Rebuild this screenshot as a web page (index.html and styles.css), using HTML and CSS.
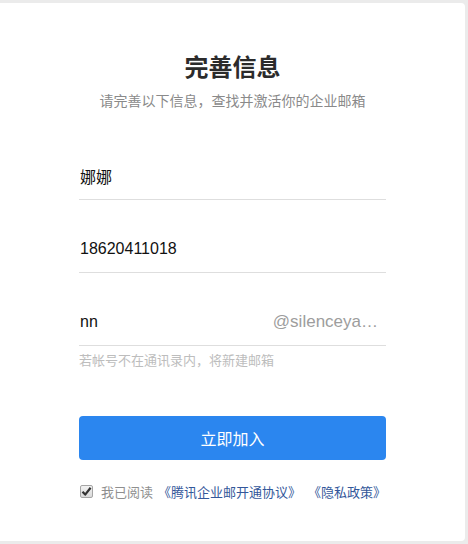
FILE: index.html
```html
<!DOCTYPE html>
<html lang="zh">
<head>
<meta charset="utf-8">
<title>完善信息</title>
<link rel="stylesheet" href="styles.css">
</head>
<body>
<div class="card">
  <h1 class="title">完善信息</h1>
  <p class="subtitle">请完善以下信息，查找并激活你的企业邮箱</p>
  <form class="form">
    <div class="field"><span class="value">娜娜</span></div>
    <div class="field"><span class="value num">18620411018</span></div>
    <div class="field split">
      <span class="value num">nn</span>
      <span class="domain">@silenceya…</span>
    </div>
    <p class="hint">若帐号不在通讯录内，将新建邮箱</p>
    <button type="button" class="btn">立即加入</button>
    <div class="agree">
      <span class="check"><svg width="11" height="11" viewBox="0 0 11 11"><path d="M1.5 5.8 L4.2 8.6 L9.6 1.8" fill="none" stroke="#333" stroke-width="2.2" stroke-linejoin="round"/></svg></span>
      <span class="agree-text">我已阅读</span>
      <a class="link">《腾讯企业邮开通协议》</a>
      <a class="link">《隐私政策》</a>
    </div>
  </form>
</div>
</body>
</html>
```

FILE: styles.css
```css
* { box-sizing: border-box; }
html, body { margin: 0; padding: 0; }
body {
  background: #ebebeb;
  font-family: "Microsoft YaHei", "Noto Sans CJK SC", "Liberation Sans", sans-serif;
  width: 468px;
  height: 544px;
  overflow: hidden;
}
.card {
  margin: 3px 3px 0 0;
  height: 538px;
  background: #fff;
  border-radius: 0 4px 4px 0;
  padding-top: 47px;
}
.title {
  margin: 0;
  text-align: center;
  font-size: 24px;
  line-height: 32px;
  font-weight: bold;
  color: #2b2b2b;
}
.subtitle {
  margin: 8px 0 0;
  text-align: center;
  font-size: 14px;
  line-height: 20px;
  color: #8a8a8a;
}
.form {
  width: 307px;
  margin: 45px 0 0 79px;
  display: flex;
  flex-direction: column;
}
.field {
  height: 45px;
  border-bottom: 1px solid #dedede;
  display: flex;
  align-items: center;
  padding: 0 8px 3px 1px;
  margin-bottom: 28px;
}
.field.split { justify-content: space-between; margin-bottom: 0; }
.value {
  font-size: 16px;
  color: #111;
}
.num { font-family: "Liberation Sans", Arial, sans-serif; }
.domain {
  font-family: "Liberation Sans", Arial, sans-serif;
  font-size: 17px;
  color: #9d9d9d;
}
.hint {
  margin: 4px 0 0;
  font-size: 13px;
  line-height: 20px;
  color: #bdbdbd;
}
.btn {
  margin-top: 46px;
  height: 44px;
  border: 0;
  border-radius: 4px;
  background: #2b86ef;
  color: #fff;
  font-family: inherit;
  font-size: 16px;
  padding: 0;
}
.agree {
  margin-top: 21px;
  display: flex;
  align-items: center;
  height: 20px;
  font-size: 13px;
  padding-left: 1px;
  white-space: nowrap;
}
.check {
  flex: none;
  width: 13px;
  height: 13px;
  border: 1px solid #a5a5a5;
  border-radius: 2px;
  background: linear-gradient(#f2f2f2, #d9d9d9);
  display: flex;
  align-items: center;
  justify-content: center;
  margin-right: 8px;
}
.agree-text { color: #8f8f8f; margin-right: 5px; }
.link { color: #33579a; margin-right: 7px; }
```
